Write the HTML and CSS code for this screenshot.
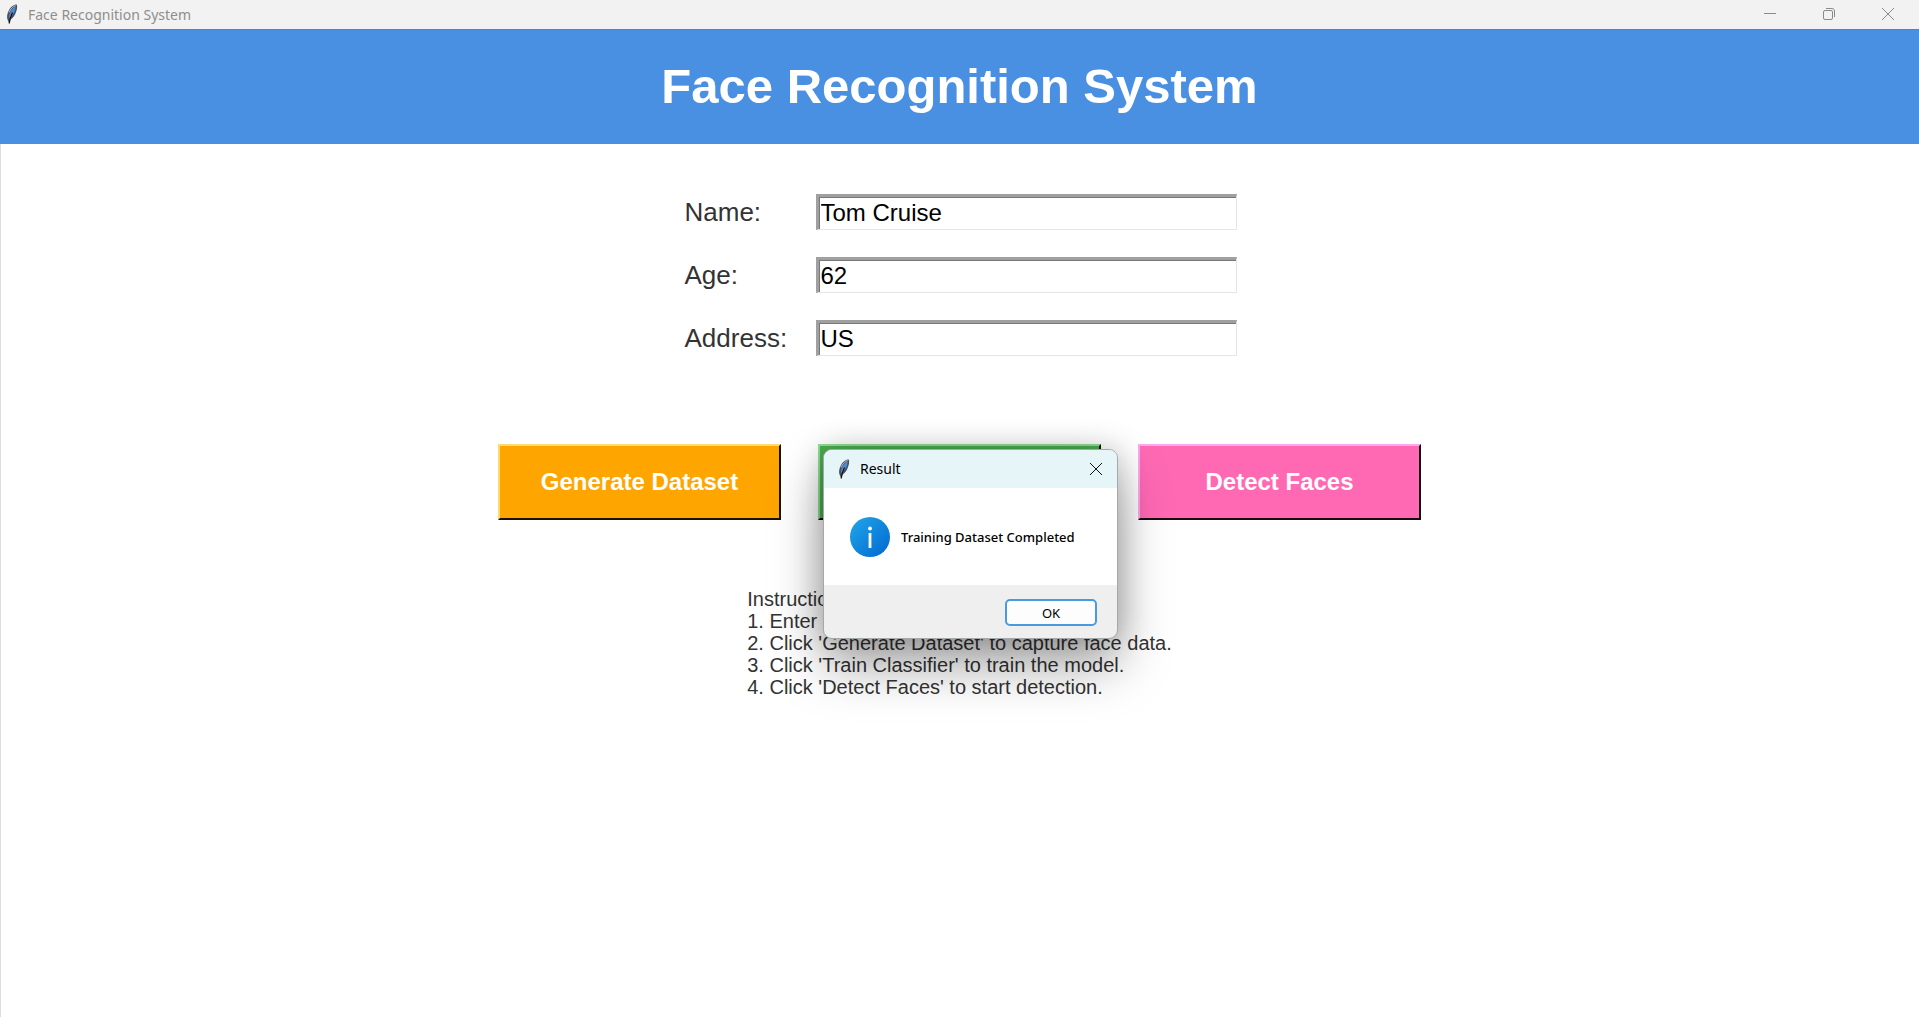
FILE: index.html
```html
<!DOCTYPE html>
<html lang="en">
<head>
<meta charset="utf-8">
<title>Face Recognition System</title>
<link rel="stylesheet" href="styles.css">
</head>
<body>
<svg class="sprite" aria-hidden="true">
  <defs>
    <linearGradient id="info-fill" x1="0" y1="0" x2="1" y2="1">
      <stop offset="0" stop-color="#22a7ea"/>
      <stop offset="1" stop-color="#0067cf"/>
    </linearGradient>
  </defs>
  <symbol id="feather" viewBox="0 0 12 20">
    <path d="M10.800 0.500C7.500 0.500 4.500 3 2.800 6.500C1.200 9.500 0.600 13 1.500 15.500L3.200 19.500L4.500 15.500C7 14 9 11.500 10 8C11 5.500 11.500 3 10.800 0.500Z" fill="#4a4f58"/>
    <path d="M9.800 1.800C7.500 3 5.500 5.500 4.200 8.500C3 11 2.600 13 3.100 14.500C5.800 12.500 8 9.500 9.200 6Z" fill="#4a8ad8"/>
    <path d="M9.500 1.500C6.500 2.500 4.500 5 3.200 8.500" stroke="#b4bcc8" stroke-width="1" fill="none"/>
    <path d="M6.500 8.500C5 11.500 3.800 14 3.200 19.500" stroke="#111" stroke-width="1.200" fill="none"/>
  </symbol>
</svg>

<div class="window">
  <div class="titlebar">
    <svg class="feather"><use href="#feather"/></svg>
    <span class="titlebar-text">Face Recognition System</span>
    <div class="window-controls">
      <button type="button" aria-label="Minimize"><svg viewBox="0 0 12 12"><path d="M0 5.500H12"/></svg></button>
      <button type="button" aria-label="Restore"><svg viewBox="0 0 12 12"><rect x="0.500" y="2.500" width="9" height="9" rx="1.500"/><path d="M3 0.500H9A2.500 2.500 0 0 1 11.500 3V9"/></svg></button>
      <button type="button" aria-label="Close"><svg viewBox="0 0 12 12"><path d="M0 0L12 12M12 0L0 12"/></svg></button>
    </div>
  </div>

  <header class="banner"><h1>Face Recognition System</h1></header>

  <main class="content">
    <form class="details">
      <label for="name">Name:</label>
      <input id="name" type="text" value="Tom Cruise">
      <label for="age">Age:</label>
      <input id="age" type="text" value="62">
      <label for="address">Address:</label>
      <input id="address" type="text" value="US">
    </form>

    <div class="actions">
      <button type="button" class="action generate">Generate Dataset</button>
      <div class="action-slot">
        <button type="button" class="action train" aria-label="Train Classifier"></button>
        <div class="dialog" role="dialog" aria-labelledby="dialog-title">
          <div class="dialog-titlebar">
            <svg class="feather"><use href="#feather"/></svg>
            <span id="dialog-title">Result</span>
            <button type="button" class="dialog-close" aria-label="Close"><svg viewBox="0 0 12 12"><path d="M0 0L12 12M12 0L0 12"/></svg></button>
          </div>
          <div class="dialog-body">
            <svg class="info" viewBox="0 0 40 40" aria-hidden="true">
              <circle cx="20" cy="20" r="20" fill="url(#info-fill)"/>
              <circle cx="20" cy="11.500" r="1.900" fill="#fff"/>
              <path d="M20 16V31" stroke="#fff" stroke-width="2.800"/>
            </svg>
            <p>Training Dataset Completed</p>
          </div>
          <div class="dialog-footer"><button type="button" class="ok">OK</button></div>
        </div>
      </div>
      <button type="button" class="action detect">Detect Faces</button>
    </div>

    <div class="instructions">
      <p>Instructions:</p>
      <p>1. Enter all details.</p>
      <p>2. Click 'Generate Dataset' to capture face data.</p>
      <p>3. Click 'Train Classifier' to train the model.</p>
      <p>4. Click 'Detect Faces' to start detection.</p>
    </div>
  </main>
</div>
</body>
</html>
```
FILE: styles.css
```css
* { box-sizing: border-box; }

body {
  margin: 0;
  background: #fff;
  color: #333;
  font-family: "Liberation Sans", Arial, sans-serif;
}

h1, p { margin: 0; }

.sprite { position: absolute; width: 0; height: 0; }

.window {
  min-height: 100vh;
  display: flex;
  flex-direction: column;
}

.titlebar {
  display: flex;
  align-items: center;
  height: 29px;
  padding: 0 2px 1px 6px;
  background: #f2f2f2;
  color: #8e8e8e;
  font: 14px "Noto Sans", sans-serif;
}

.feather { width: 12px; height: 20px; margin-right: 10px; }

.window-controls { display: flex; margin-left: auto; }

.window-controls button {
  display: flex;
  align-items: center;
  justify-content: center;
  width: 59px;
  height: 28px;
  padding: 0;
  border: 0;
  background: none;
}

.window-controls svg,
.dialog-close svg {
  width: 12px;
  height: 12px;
  fill: none;
  stroke: #8a8a8a;
  overflow: visible;
}

.banner {
  height: 115px;
  display: flex;
  align-items: center;
  justify-content: center;
  padding-bottom: 2px;
  background: #4a90e2;
  border-top: 1px solid #4484d0;
  color: #fff;
}

.banner h1 { font-size: 49px; line-height: 56px; }

.content {
  flex: 1;
  display: flex;
  flex-direction: column;
  align-items: center;
  padding-top: 50px;
  box-shadow: inset 1px 0 #dcdcdc;
}

.details {
  display: grid;
  grid-template-columns: 131px 421px;
  row-gap: 27px;
  align-items: center;
  padding-left: 2px;
}

.details label { font-size: 26px; line-height: 36px; }

.details input {
  height: 36px;
  padding: 0 2px;
  border: 1px solid #e6e6e6;
  border-top: 3px solid #a0a0a0;
  border-left: 3px solid #a0a0a0;
  border-radius: 0;
  outline: 0;
  background: #fff;
  box-shadow: inset 1px 1px #787878;
  color: #000;
  font: 24px "Liberation Sans", Arial, sans-serif;
}

.actions {
  display: flex;
  gap: 37px;
  margin-top: 88px;
}

.action {
  display: block;
  width: 283px;
  height: 76px;
  padding: 0;
  border: 2px solid;
  color: #fff;
  font: bold 24px "Liberation Sans", Arial, sans-serif;
}

.generate { background: #ffa500; border-color: #ffdb70 #1a1100 #1a1100 #ffdb70; }
.train { background: #4caf50; border-color: #8fe092 #08120a #08120a #8fe092; }
.detect { background: #ff69b4; border-color: #ffa8f0 #1a0a12 #1a0a12 #ffa8f0; }

.action-slot { position: relative; }

.dialog {
  position: absolute;
  top: 5px;
  left: 5px;
  width: 295px;
  border: 1px solid #a5a8a8;
  border-radius: 9px;
  background: #efefef;
  box-shadow: 0 26px 52px rgba(0, 0, 0, 0.36), 0 0 30px rgba(0, 0, 0, 0.2);
  color: #000;
  font-family: "Noto Sans", sans-serif;
}

.dialog-titlebar {
  display: flex;
  align-items: center;
  height: 38px;
  padding: 0 15px 1px 14px;
  border-radius: 8px 8px 0 0;
  background: #e6f6f8;
  font-size: 14px;
}

.dialog-close {
  display: flex;
  margin-left: auto;
  padding: 0;
  border: 0;
  background: none;
}

.dialog-close svg { stroke: #111; }

.dialog-body {
  display: flex;
  align-items: center;
  gap: 11px;
  height: 97px;
  padding-left: 26px;
  background: #fff;
}

.info { width: 40px; height: 40px; }

.dialog-body p { font-size: 13px; font-weight: 500; line-height: 20px; }

.dialog-footer {
  display: flex;
  justify-content: flex-end;
  padding: 14px 20px 12px;
}

.ok {
  width: 92px;
  height: 27px;
  padding: 0;
  border: 2px solid #4a9ade;
  border-radius: 5px;
  background: #fdfdfd;
  color: #000;
  font: 13px "Noto Sans", sans-serif;
}

.instructions {
  margin-top: 68px;
  font-size: 20px;
  line-height: 22px;
}
```
